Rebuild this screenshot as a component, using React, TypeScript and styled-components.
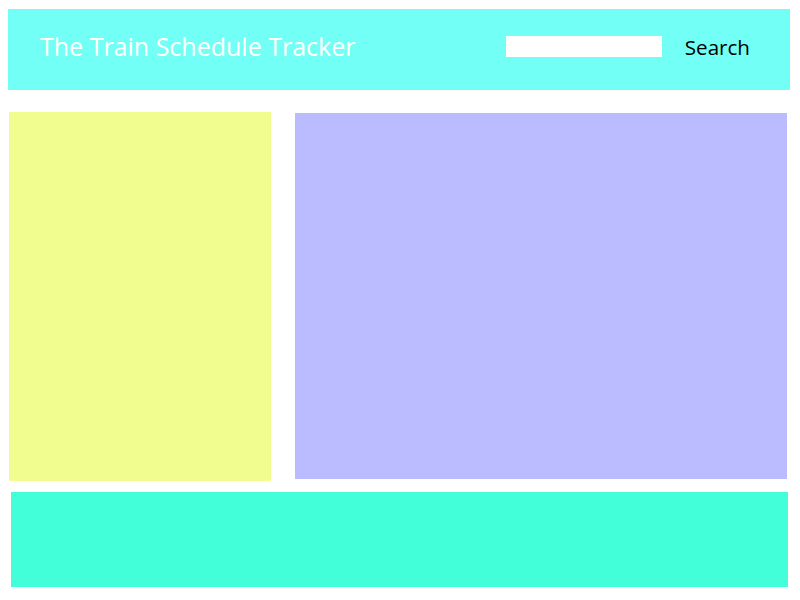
import React from "react";
import styled, { createGlobalStyle } from "styled-components";

const Global = createGlobalStyle`
  html, body { margin: 0; padding: 0; background: #ffffff; }
  body { font-family: "Open Sans", "Liberation Sans", sans-serif; }
`;

const Page = styled.div`
  width: 800px;
  height: 600px;
  display: flex;
  flex-direction: column;
  padding-top: 9px;
  box-sizing: border-box;
`;

const Header = styled.header`
  margin-left: 8px;
  width: 782px;
  height: 81px;
  background: #72fff5;
  display: flex;
  align-items: center;
  box-sizing: border-box;
  padding: 0 40px 0 32px;
`;

const Title = styled.h1`
  margin: 0;
  flex: 1;
  font-family: "Open Sans", sans-serif;
  font-weight: 400;
  font-size: 25px;
  line-height: 34px;
  color: #ffffff;
  padding-bottom: 7px;
`;

const SearchInput = styled.input`
  width: 156px;
  height: 21px;
  border: none;
  outline: none;
  background: #ffffff;
  padding: 0;
  margin-right: 23px;
  margin-bottom: 7px;
`;

const SearchButton = styled.button`
  border: none;
  background: transparent;
  padding: 0;
  font-family: "Open Sans", sans-serif;
  font-size: 20.6px;
  line-height: 28px;
  color: #000000;
  cursor: pointer;
  margin-bottom: 6px;
`;

const Main = styled.main`
  display: flex;
  align-items: flex-start;
  margin-top: 22px;
  margin-left: 9px;
  gap: 24px;
`;

const Panel = styled.section<{ $w: number; $h: number; $bg: string; $top?: number }>`
  width: ${(p) => p.$w}px;
  height: ${(p) => p.$h}px;
  background: ${(p) => p.$bg};
  margin-top: ${(p) => p.$top ?? 0}px;
`;

const Footer = styled.footer`
  margin-top: 11px;
  margin-left: 11px;
  width: 777px;
  height: 95px;
  background: #42ffda;
`;

export default function App() {
  return (
    <>
      <Global />
      <Page>
        <Header>
          <Title>The Train Schedule Tracker</Title>
          <SearchInput type="text" aria-label="Search" />
          <SearchButton>Search</SearchButton>
        </Header>
        <Main>
          <Panel $w={262} $h={369} $bg="#f1fe8f" />
          <Panel $w={492} $h={366} $bg="#bbbbff" $top={1} />
        </Main>
        <Footer />
      </Page>
    </>
  );
}
